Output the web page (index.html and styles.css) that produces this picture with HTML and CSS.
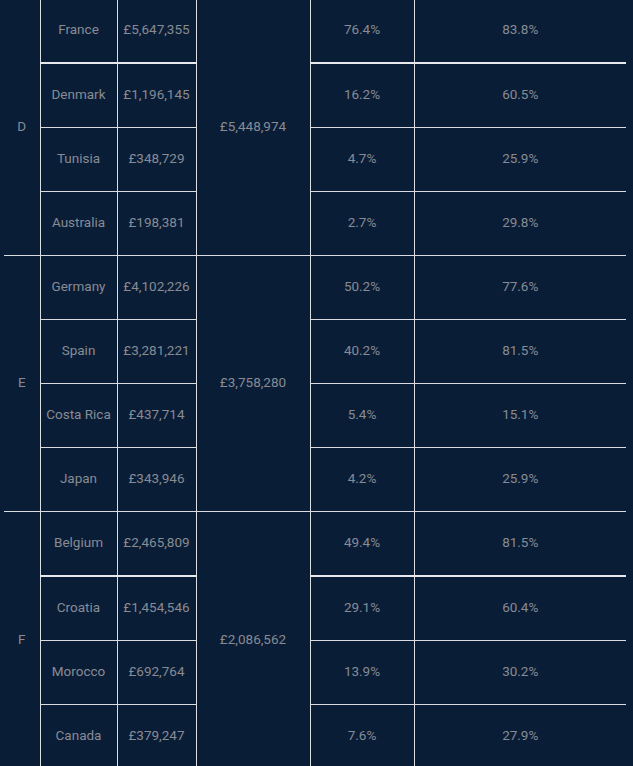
FILE: index.html
```html
<!DOCTYPE html>
<html lang="en">
<head>
<meta charset="utf-8">
<title>Sales by group</title>
<link rel="stylesheet" href="styles.css">
</head>
<body>
<div class="wrap">
<table class="data">
  <colgroup>
    <col class="c-grp"><col class="c-country"><col class="c-amount"><col class="c-total"><col class="c-pct1"><col class="c-pct2">
  </colgroup>
  <tbody>
    <tr class="thick"><td class="span" rowspan="4">D</td><td>France</td><td>£5,647,355</td><td class="span" rowspan="4">£5,448,974</td><td>76.4%</td><td>83.8%</td></tr>
    <tr><td>Denmark</td><td>£1,196,145</td><td>16.2%</td><td>60.5%</td></tr>
    <tr><td>Tunisia</td><td>£348,729</td><td>4.7%</td><td>25.9%</td></tr>
    <tr><td>Australia</td><td>£198,381</td><td>2.7%</td><td>29.8%</td></tr>
    <tr><td class="span" rowspan="4">E</td><td>Germany</td><td>£4,102,226</td><td class="span" rowspan="4">£3,758,280</td><td>50.2%</td><td>77.6%</td></tr>
    <tr><td>Spain</td><td>£3,281,221</td><td>40.2%</td><td>81.5%</td></tr>
    <tr><td>Costa Rica</td><td>£437,714</td><td>5.4%</td><td>15.1%</td></tr>
    <tr><td>Japan</td><td>£343,946</td><td>4.2%</td><td>25.9%</td></tr>
    <tr class="thick"><td class="span" rowspan="4">F</td><td>Belgium</td><td>£2,465,809</td><td class="span" rowspan="4">£2,086,562</td><td>49.4%</td><td>81.5%</td></tr>
    <tr><td>Croatia</td><td>£1,454,546</td><td>29.1%</td><td>60.4%</td></tr>
    <tr><td>Morocco</td><td>£692,764</td><td>13.9%</td><td>30.2%</td></tr>
    <tr><td>Canada</td><td>£379,247</td><td>7.6%</td><td>27.9%</td></tr>
  </tbody>
</table>
</div>
</body>
</html>
```

FILE: styles.css
```css
html, body {
  margin: 0;
  padding: 0;
  background: #0a1d37;
}
.wrap {
  padding-left: 4px;
  margin-top: -1px;
}
.data {
  border-collapse: collapse;
  border-style: hidden;
  table-layout: fixed;
  width: 622px;
  font-family: Roboto, "Liberation Sans", sans-serif;
  font-size: 13.5px;
  color: #878b93;
}
.c-grp { width: 36px; }
.c-country { width: 77px; }
.c-amount { width: 79px; }
.c-total { width: 114px; }
.c-pct1 { width: 104px; }
.c-pct2 { width: 212px; }
.data td {
  border: 1px solid #dcdde0;
  padding: 0 0 3px 0;
  height: 60px;
  text-align: center;
  vertical-align: middle;
  white-space: nowrap;
}
.data tr.thick td:not(.span) {
  border-bottom: 2px solid #e8e9ec;
}
```
